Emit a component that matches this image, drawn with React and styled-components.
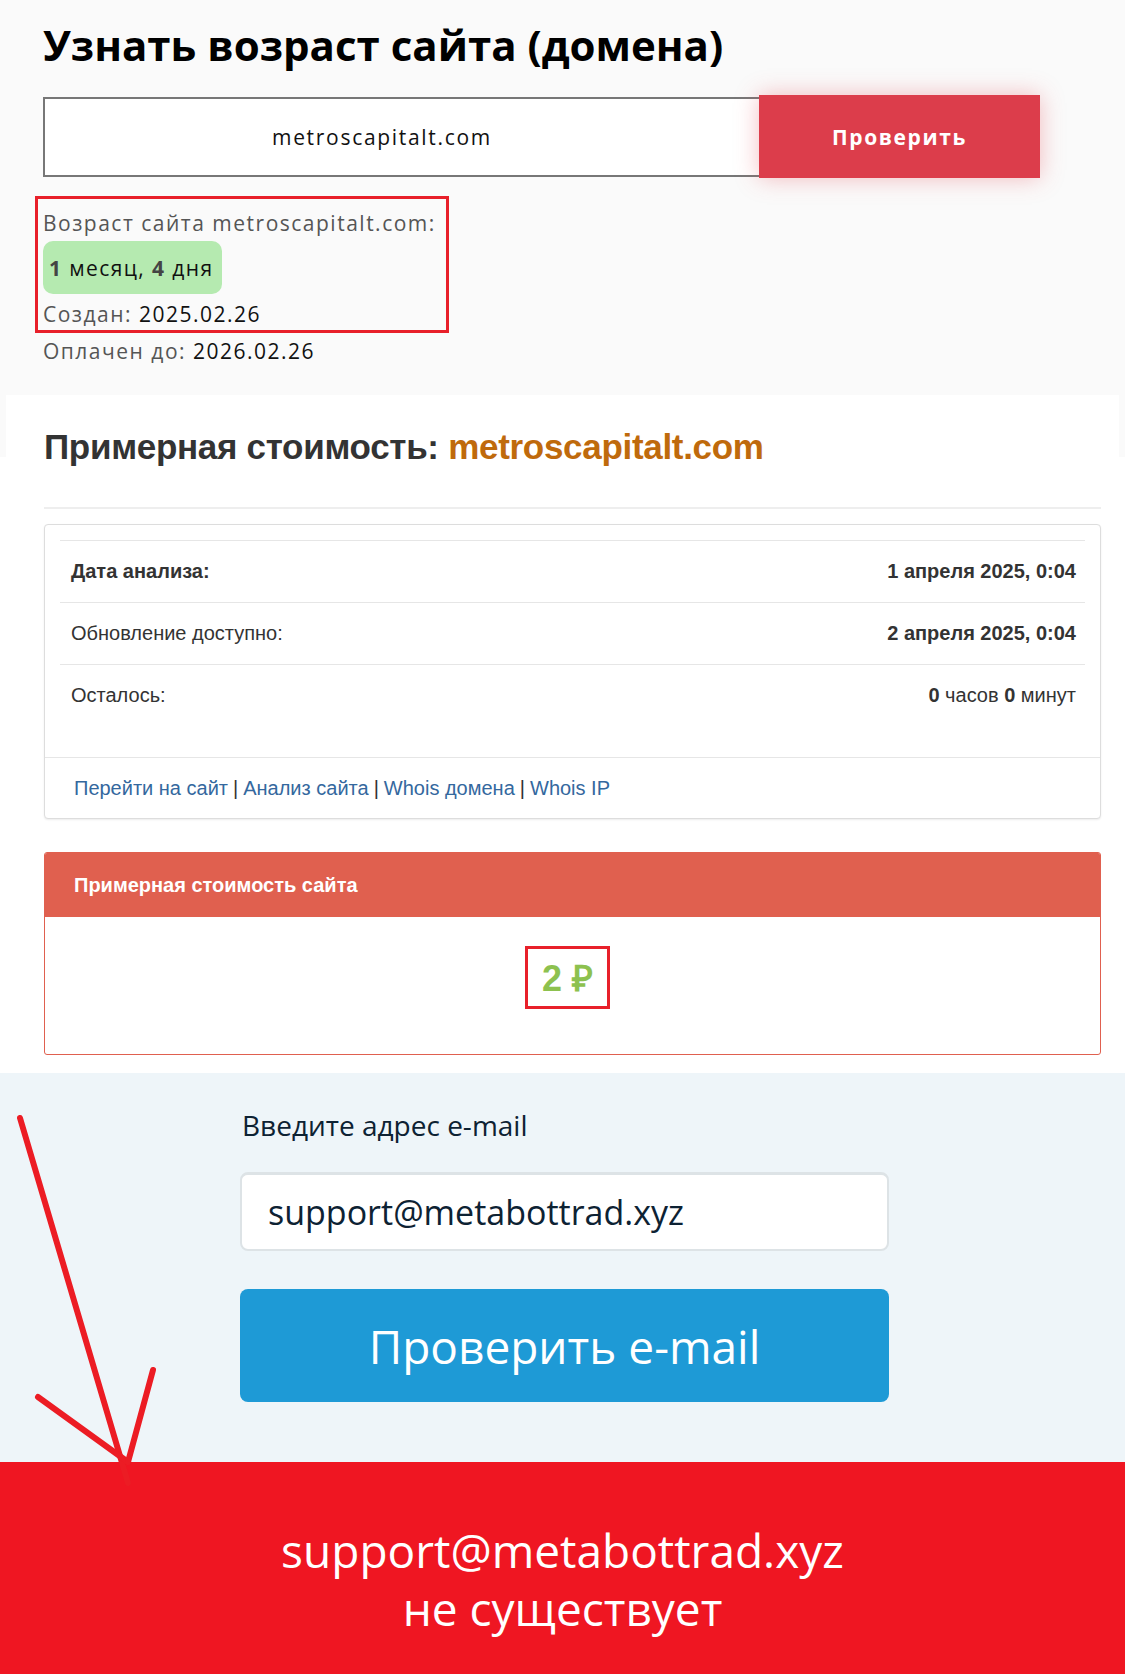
import React from "react";
import styled, { createGlobalStyle } from "styled-components";

const GlobalStyle = createGlobalStyle`
  * { box-sizing: border-box; }
  body {
    margin: 0;
    background: #fff;
    font-family: "Liberation Sans", Arial, sans-serif;
  }
`;

const Page = styled.div`
  position: relative;
  width: 1125px;
  overflow: hidden;
`;

/* ---------- top: domain age ---------- */

const AgeSection = styled.section`
  background: #fafafa;
  padding: 19px 0 29px 43px;
  font-family: "Open Sans", "Noto Sans", sans-serif;
`;

const Title = styled.h1`
  margin: 0;
  font-size: 42px;
  line-height: 52px;
  font-weight: 700;
  color: #000;
`;

const SearchRow = styled.div`
  display: flex;
  align-items: center;
  margin-top: 24px;
`;

const DomainInput = styled.div`
  width: 716px;
  height: 80px;
  display: flex;
  align-items: center;
  justify-content: center;
  padding-right: 40px;
  background: #fff;
  border: 2px solid #777;
  border-right: none;
  font-size: 21px;
  letter-spacing: 1.7px;
  color: #111;
`;

const CheckButton = styled.button`
  width: 281px;
  height: 83px;
  border: none;
  background: #dc3d4b;
  color: #fff;
  font-family: inherit;
  font-size: 21px;
  font-weight: 700;
  letter-spacing: 1.6px;
  box-shadow: 0 0 22px rgba(230, 70, 80, 0.35);
`;

const Marked = styled.div`
  width: 414px;
  margin: 18px 0 0 -8px;
  padding: 9px 8px 1px 5px;
  border: 3px solid #e8202a;
`;

const InfoLine = styled.div`
  font-size: 21px;
  line-height: 30px;
  letter-spacing: 1.5px;
  white-space: nowrap;
  color: #555;
  margin-top: ${(p) => p.$gap || 0}px;
  b {
    font-weight: 400;
    color: #111;
  }
`;

const AgeBadge = styled.div`
  display: inline-flex;
  align-items: center;
  width: 179px;
  height: 53px;
  margin-top: 3px;
  padding-left: 6px;
  border-radius: 10px;
  background: #b5eab0;
  font-size: 21px;
  letter-spacing: 1.4px;
  white-space: nowrap;
  color: #111;
  b {
    color: #444;
    font-weight: 700;
  }
`;

/* ---------- middle: price estimate ---------- */

const PriceSection = styled.section`
  padding: 0 6px 18px;
  background: linear-gradient(to bottom, #fafafa 62px, #fff 62px);
`;

const Sheet = styled.div`
  background: #fff;
  padding: 32px 18px 0 38px;
`;

const Heading = styled.h2`
  margin: 0;
  font-size: 35px;
  line-height: 40px;
  font-weight: 700;
  letter-spacing: -0.3px;
  color: #333;
  span {
    color: #bf6a0c;
  }
`;

const Rule = styled.hr`
  margin: 40px 0 0;
  border: none;
  border-top: 2px solid #eee;
`;

const Panel = styled.div`
  margin-top: 15px;
  background: #fff;
  border: 1px solid #ddd;
  border-radius: 4px;
  box-shadow: 0 1px 2px rgba(0, 0, 0, 0.08);
  overflow: hidden;
`;

const PanelBody = styled.div`
  padding: 15px 15px 31px;
`;

const Row = styled.div`
  display: flex;
  align-items: center;
  justify-content: space-between;
  height: 62px;
  padding: 0 9px 0 11px;
  border-top: 1px solid #e6e6e6;
  font-size: 20px;
  color: #333;
`;

const Label = styled.span`
  font-weight: ${(p) => (p.$bold ? 700 : 400)};
`;

const Value = styled.span`
  font-weight: ${(p) => (p.$bold ? 700 : 400)};
  b {
    font-weight: 700;
  }
`;

const PanelFooter = styled.div`
  height: 61px;
  display: flex;
  align-items: center;
  padding-left: 29px;
  border-top: 1px solid #e6e6e6;
  font-size: 20px;
  color: #333;
`;

const Link = styled.a`
  color: #34689e;
  text-decoration: none;
`;

const Sep = styled.span`
  margin: 0 5px;
  color: #333;
`;

const CostPanel = styled.div`
  margin-top: 33px;
  border: 1px solid #e0604f;
  border-radius: 3px;
  overflow: hidden;
`;

const CostHeader = styled.div`
  height: 64px;
  display: flex;
  align-items: center;
  padding-left: 29px;
  background: #e0604f;
  color: #fff;
  font-size: 20px;
  font-weight: 700;
`;

const CostBody = styled.div`
  display: flex;
  justify-content: center;
  padding: 29px 10px 45px 0;
`;

const PriceBox = styled.div`
  width: 85px;
  height: 63px;
  display: flex;
  align-items: center;
  justify-content: center;
  border: 3px solid #e8202a;
  font-size: 36px;
  font-weight: 700;
  color: #8dc14f;
`;

/* ---------- bottom: e-mail check ---------- */

const MailSection = styled.section`
  background: #eef5f9;
  padding: 35px 0 60px;
  font-family: "Open Sans", Lato, sans-serif;
`;

const MailColumn = styled.div`
  width: 649px;
  margin-left: 240px;
`;

const MailLabel = styled.div`
  padding-left: 2px;
  font-size: 28px;
  line-height: 34px;
  font-weight: 500;
  color: #0d2233;
`;

const MailInput = styled.div`
  height: 79px;
  margin-top: 30px;
  display: flex;
  align-items: center;
  padding-left: 26px;
  background: #fff;
  border: 2px solid #dde3e6;
  border-top-width: 3px;
  border-radius: 8px;
  font-size: 34px;
  color: #0d2233;
`;

const MailButton = styled.button`
  width: 100%;
  height: 113px;
  margin-top: 38px;
  border: none;
  border-radius: 8px;
  background: #1e9ad6;
  color: #fff;
  font-family: inherit;
  font-size: 46px;
`;

const Verdict = styled.section`
  background: #ef1622;
  padding: 59px 0 37px;
  text-align: center;
  font-family: "Open Sans", Lato, sans-serif;
  font-size: 46px;
  line-height: 58px;
  color: #fff;
`;

const Arrow = styled.svg`
  position: absolute;
  left: 0;
  top: 1100px;
  pointer-events: none;
`;

export default function App() {
  return (
    <Page>
      <GlobalStyle />

      <AgeSection>
        <Title>Узнать возраст сайта (домена)</Title>
        <SearchRow>
          <DomainInput>metroscapitalt.com</DomainInput>
          <CheckButton>Проверить</CheckButton>
        </SearchRow>
        <Marked>
          <InfoLine>Возраст сайта metroscapitalt.com:</InfoLine>
          <AgeBadge>
            <b>1</b>&nbsp;месяц,&nbsp;<b>4</b>&nbsp;дня
          </AgeBadge>
          <InfoLine $gap={5}>
            Создан: <b>2025.02.26</b>
          </InfoLine>
        </Marked>
        <InfoLine $gap={3}>
          Оплачен до: <b>2026.02.26</b>
        </InfoLine>
      </AgeSection>

      <PriceSection>
        <Sheet>
          <Heading>
            Примерная стоимость: <span>metroscapitalt.com</span>
          </Heading>
          <Rule />
          <Panel>
            <PanelBody>
              <Row>
                <Label $bold>Дата анализа:</Label>
                <Value $bold>1 апреля 2025, 0:04</Value>
              </Row>
              <Row>
                <Label>Обновление доступно:</Label>
                <Value $bold>2 апреля 2025, 0:04</Value>
              </Row>
              <Row>
                <Label>Осталось:</Label>
                <Value>
                  <b>0</b> часов <b>0</b> минут
                </Value>
              </Row>
            </PanelBody>
            <PanelFooter>
              <Link href="#">Перейти на сайт</Link>
              <Sep>|</Sep>
              <Link href="#">Анализ сайта</Link>
              <Sep>|</Sep>
              <Link href="#">Whois домена</Link>
              <Sep>|</Sep>
              <Link href="#">Whois IP</Link>
            </PanelFooter>
          </Panel>

          <CostPanel>
            <CostHeader>Примерная стоимость сайта</CostHeader>
            <CostBody>
              <PriceBox>2 ₽</PriceBox>
            </CostBody>
          </CostPanel>
        </Sheet>
      </PriceSection>

      <MailSection>
        <MailColumn>
          <MailLabel>Введите адрес e-mail</MailLabel>
          <MailInput>support@metabottrad.xyz</MailInput>
          <MailButton>Проверить e-mail</MailButton>
        </MailColumn>
      </MailSection>

      <Verdict>
        support@metabottrad.xyz
        <br />
        не существует
      </Verdict>

      <Arrow width="200" height="400" viewBox="0 1100 200 400">
        <g stroke="#ec1c24" strokeWidth="6" strokeLinecap="round" fill="none">
          <line x1="20" y1="1118" x2="128" y2="1483" />
          <line x1="38" y1="1397" x2="128" y2="1462" />
          <line x1="153" y1="1370" x2="128" y2="1462" />
        </g>
      </Arrow>
    </Page>
  );
}
